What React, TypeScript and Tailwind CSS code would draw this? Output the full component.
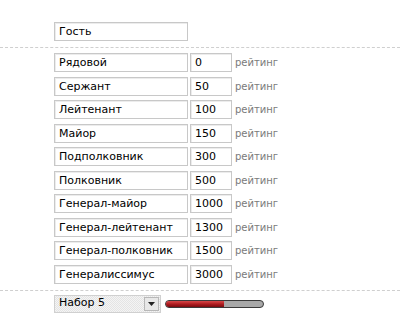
import React from "react";

const ranks = [
  ["Рядовой", "0"],
  ["Сержант", "50"],
  ["Лейтенант", "100"],
  ["Майор", "150"],
  ["Подполковник", "300"],
  ["Полковник", "500"],
  ["Генерал-майор", "1000"],
  ["Генерал-лейтенант", "1300"],
  ["Генерал-полковник", "1500"],
  ["Генералиссимус", "3000"],
];

const Field = ({ value, className }: { value: string; className: string }) => (
  <div
    className={`h-[19px] border border-[#c8c8c8] bg-white px-[4px] text-[11px] leading-[17px] text-black shadow-[inset_1px_1px_0_#ececec] ${className}`}
  >
    {value}
  </div>
);

const App = () => {
  return (
    <div className="h-[321px] w-[400px] overflow-hidden bg-white pt-[22px] font-['DejaVu_Sans',sans-serif]">
      <div className="pl-[54px]">
        <Field value="Гость" className="w-[134px]" />
      </div>
      <div className="mt-[6px] border-t border-dashed border-[#cfcfcf]" />

      <div className="mt-[5px] flex flex-col gap-[4.5px] pl-[54px]">
        {ranks.map(([name, score]) => (
          <div key={name} className="flex items-center">
            <Field value={name} className="w-[134px]" />
            <Field value={score} className="ml-[2px] w-[42px]" />
            <span className="ml-[3px] text-[10px] text-[#7a7a7a]">рейтинг</span>
          </div>
        ))}
      </div>

      <div className="mt-[6px] border-t border-dashed border-[#cfcfcf]" />

      <div className="mt-[4px] flex items-center pl-[54px]">
        <div className="flex h-[18px] w-[107px] items-center justify-between border border-[#d0d0d0] bg-[repeating-conic-gradient(#e4e4e4_0_25%,#f4f4f4_0_50%)] bg-[length:2px_2px] pl-[4px] text-[11px] text-black">
          <span>Набор 5</span>
          <div className="mr-[1px] flex h-[14px] w-[15px] items-center justify-center border border-[#b8b8b8] bg-[#e8e8e8]">
            <svg width="7" height="4" viewBox="0 0 7 4">
              <path d="M0 0h7L3.5 4z" fill="#222" />
            </svg>
          </div>
        </div>
        <div className="ml-[4px] flex h-[8px] w-[99px] overflow-hidden rounded-full border border-[#3a3a3a] bg-[#a8a8a8]">
          <div className="h-full w-[60%] bg-gradient-to-b from-[#d8474a] via-[#b01c20] to-[#7a0c10]" />
        </div>
      </div>
    </div>
  );
};

export default App;
